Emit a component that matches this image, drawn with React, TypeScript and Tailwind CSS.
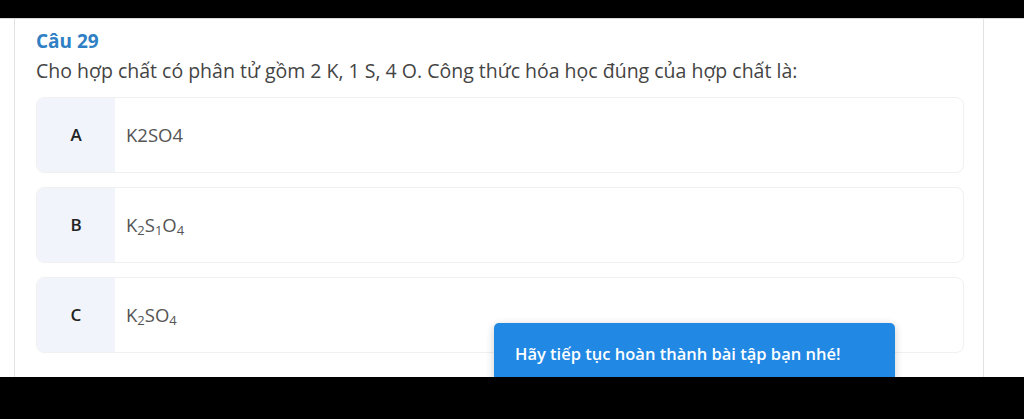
import React from 'react';

const Sub = ({ children }: { children: React.ReactNode }) => (
  <span className="text-[13px] relative top-[3px]">{children}</span>
);

const OPTIONS: { key: string; content: React.ReactNode }[] = [
  { key: 'A', content: <>K2SO4</> },
  {
    key: 'B',
    content: (
      <>
        K<Sub>2</Sub>S<Sub>1</Sub>O<Sub>4</Sub>
      </>
    ),
  },
  {
    key: 'C',
    content: (
      <>
        K<Sub>2</Sub>SO<Sub>4</Sub>
      </>
    ),
  },
];

export default function App() {
  return (
    <div className="w-[1024px] h-[419px] bg-black flex flex-col overflow-hidden" style={{ fontFamily: '"Open Sans", "Noto Sans", sans-serif' }}>
      <div className="h-[18px] bg-black shrink-0" />
      <div className="relative h-[359px] bg-white border-t border-[#d8d8d8] overflow-hidden shrink-0">
        <div className="ml-[14px] w-[970px] h-full border-l border-r border-[#e2e2e2] pl-[21px] pr-[20px] pt-[9px]">
          <h2 className="text-[19px] font-bold text-[#2f7fc4] leading-[26px]">Câu 29</h2>
          <p className="mt-[4px] text-[19.5px] text-[#444] leading-[26px]">
            Cho hợp chất có phân tử gồm 2 K, 1 S, 4 O. Công thức hóa học đúng của hợp chất là:
          </p>
          <div className="mt-[13px] flex flex-col gap-[14px] w-[928px]">
            {OPTIONS.map((o) => (
              <div key={o.key} className="flex h-[76px] rounded-[8px] border border-[#f0f0f0] overflow-hidden">
                <div className="w-[78px] bg-[#f1f4fa] flex items-center justify-center text-[17px] font-semibold text-[#222]">
                  {o.key}
                </div>
                <div className="flex-1 flex items-center pl-[11px] text-[18.5px] text-[#555]">
                  <span>{o.content}</span>
                </div>
              </div>
            ))}
          </div>
        </div>
        <div className="absolute left-[494px] top-[304px] w-[401px] h-[80px] rounded-[5px] bg-[#2188e4] shadow-[0_2px_8px_rgba(0,0,0,0.2)] pl-[21px] pt-[19px]">
          <span className="text-[16.5px] font-semibold text-white">Hãy tiếp tục hoàn thành bài tập bạn nhé!</span>
        </div>
      </div>
      <div className="flex-1 bg-black" />
    </div>
  );
}
